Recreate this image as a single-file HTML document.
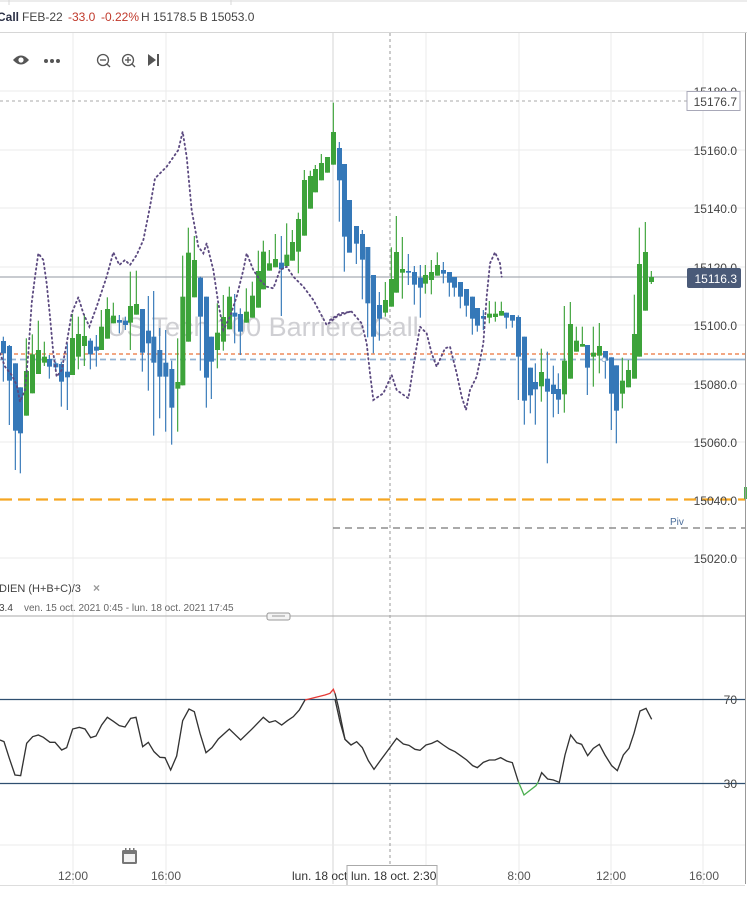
<!DOCTYPE html>
<html><head><meta charset="utf-8"><style>
html,body{margin:0;padding:0;background:#fff;width:747px;height:910px;overflow:hidden;font-family:"Liberation Sans",sans-serif}
svg{position:absolute;left:0;top:0}
</style></head><body>
<svg width="747" height="910" viewBox="0 0 747 910" xmlns="http://www.w3.org/2000/svg" font-family="Liberation Sans, sans-serif">
<line x1="0" y1="1" x2="747" y2="1" stroke="#d8d8d8"/>
<line x1="9" y1="0" x2="9" y2="5" stroke="#d8d8d8"/>
<line x1="231" y1="0" x2="231" y2="5" stroke="#d8d8d8"/>
<text x="-3" y="21" font-size="12" font-weight="bold" fill="#2a2f45">Call</text>
<text x="22" y="21" font-size="12" fill="#444">FEB-22</text>
<text x="68" y="21" font-size="12" fill="#c0392b">-33.0</text>
<text x="101" y="21" font-size="12" fill="#c0392b">-0.22%</text>
<text x="141" y="21" font-size="12" fill="#444">H 15178.5 B 15053.0</text>
<line x1="0" y1="32.5" x2="747" y2="32.5" stroke="#d6d6d6"/>

<g stroke="#ebebeb" stroke-width="1">
<line x1="73" y1="33" x2="73" y2="884"/><line x1="166" y1="33" x2="166" y2="884"/>
<line x1="333" y1="33" x2="333" y2="884" stroke="#d4d4d4"/><line x1="426" y1="33" x2="426" y2="884"/>
<line x1="519" y1="33" x2="519" y2="884"/><line x1="611" y1="33" x2="611" y2="884"/>
<line x1="703" y1="33" x2="703" y2="884"/>
<line x1="0" y1="91" x2="745" y2="91"/><line x1="0" y1="150" x2="745" y2="150"/>
<line x1="0" y1="208" x2="745" y2="208"/><line x1="0" y1="267" x2="745" y2="267"/>
<line x1="0" y1="325" x2="745" y2="325"/><line x1="0" y1="384" x2="745" y2="384"/>
<line x1="0" y1="442" x2="745" y2="442"/><line x1="0" y1="558" x2="745" y2="558"/>
<line x1="0" y1="845" x2="745" y2="845"/>
</g>

<g fill="#555">
<path d="M13 60 Q21 51 29 60 Q21 69 13 60Z"/><circle cx="21" cy="60" r="2.6" fill="#fff"/>
<circle cx="46" cy="61" r="2"/><circle cx="52" cy="61" r="2"/><circle cx="58" cy="61" r="2"/>
<path d="M148 54 L156 60 L148 66Z"/><rect x="157" y="54" width="2" height="12"/>
</g>
<g fill="none" stroke="#555" stroke-width="1.3">
<circle cx="103" cy="60" r="5.5"/><line x1="100" y1="60" x2="106" y2="60"/><line x1="107" y1="64" x2="110" y2="67"/>
<circle cx="128" cy="60" r="5.5"/><line x1="125" y1="60" x2="131" y2="60"/><line x1="128" y1="57" x2="128" y2="63"/><line x1="132" y1="64" x2="135" y2="67"/>
</g>

<text x="107" y="336" font-size="27" fill="#cfcfd3">US Tech 100 Barrière Call</text>

<line x1="390" y1="33" x2="390" y2="865" stroke="#999" stroke-dasharray="3,3"/>

<line x1="0" y1="101" x2="688" y2="101" stroke="#aaa" stroke-dasharray="3,3"/>
<line x1="0" y1="277" x2="688" y2="277" stroke="#a7acb4" stroke-width="1.2"/>
<line x1="0" y1="354" x2="745" y2="354" stroke="#ee8a5a" stroke-width="1.5" stroke-dasharray="4,3"/>
<line x1="0" y1="359.5" x2="603" y2="359.5" stroke="#95b4d3" stroke-width="1.8" stroke-dasharray="6,4"/>
<line x1="603" y1="359.5" x2="745" y2="359.5" stroke="#95b4d3" stroke-width="1.8"/>
<line x1="0" y1="499.5" x2="745" y2="499.5" stroke="#f5a623" stroke-width="2.2" stroke-dasharray="12,6"/>
<line x1="333" y1="528" x2="745" y2="528" stroke="#777" stroke-width="1.3" stroke-dasharray="7,5"/>
<text x="670" y="525" font-size="10" fill="#4a6d9a">Piv</text>
<rect x="744" y="487" width="3" height="12" fill="#4caf50"/>

<g transform="translate(0,90) scale(0.33333)">
<g stroke="#3578b8" stroke-width="3.5">
<line x1="10" y1="740" x2="10" y2="875"/><line x1="28" y1="765" x2="28" y2="1005"/><line x1="46" y1="820" x2="46" y2="1140"/><line x1="61" y1="892" x2="61" y2="1150"/>
<line x1="148" y1="795" x2="148" y2="866"/><line x1="167" y1="815" x2="167" y2="840"/><line x1="184" y1="815" x2="184" y2="950"/><line x1="202" y1="760" x2="202" y2="960"/>
<line x1="271" y1="745" x2="271" y2="838"/><line x1="289" y1="735" x2="289" y2="830"/><line x1="358" y1="675" x2="358" y2="730"/><line x1="376" y1="680" x2="376" y2="720"/>
<line x1="427" y1="657" x2="427" y2="845"/><line x1="445" y1="618" x2="445" y2="902"/><line x1="461" y1="603" x2="461" y2="1037"/><line x1="479" y1="714" x2="479" y2="985"/>
<line x1="497" y1="720" x2="497" y2="1025"/><line x1="515" y1="812" x2="515" y2="1064"/><line x1="601" y1="560" x2="601" y2="842"/><line x1="619" y1="620" x2="619" y2="953"/>
<line x1="634" y1="740" x2="634" y2="927"/><line x1="704" y1="612" x2="704" y2="760"/><line x1="721" y1="655" x2="721" y2="795"/><line x1="844" y1="438" x2="844" y2="678"/>
<line x1="1018" y1="156" x2="1018" y2="395"/><line x1="1033" y1="222" x2="1033" y2="545"/>
</g>
<g fill="#3578b8">
<rect x="3" y="753" width="15" height="37"/><rect x="21" y="768" width="15" height="104"/><rect x="39" y="820" width="15" height="202"/><rect x="54" y="892" width="15" height="138"/>
<rect x="141" y="807" width="15" height="23"/><rect x="160" y="820" width="15" height="12"/><rect x="177" y="822" width="15" height="53"/><rect x="195" y="845" width="15" height="17"/>
<rect x="264" y="752" width="15" height="41"/><rect x="282" y="770" width="15" height="12"/><rect x="351" y="690" width="15" height="8"/><rect x="369" y="692" width="15" height="13"/>
<rect x="420" y="657" width="15" height="131"/><rect x="438" y="722" width="15" height="38"/><rect x="454" y="740" width="15" height="78"/><rect x="472" y="780" width="15" height="80"/>
<rect x="490" y="818" width="15" height="42"/><rect x="508" y="837" width="15" height="116"/><rect x="594" y="563" width="15" height="117"/><rect x="612" y="620" width="15" height="243"/>
<rect x="627" y="740" width="15" height="75"/><rect x="697" y="668" width="15" height="12"/><rect x="714" y="672" width="15" height="53"/><rect x="837" y="518" width="15" height="20"/>
<rect x="1011" y="174" width="15" height="97"/><rect x="1026" y="222" width="15" height="218"/><rect x="1041" y="330" width="15" height="158"/>
</g>
<g stroke="#3da33a" stroke-width="3.5">
<line x1="79" y1="745" x2="79" y2="977"/><line x1="97" y1="733" x2="97" y2="910"/><line x1="115" y1="692" x2="115" y2="852"/><line x1="133" y1="755" x2="133" y2="828"/>
<line x1="217" y1="672" x2="217" y2="855"/><line x1="235" y1="680" x2="235" y2="838"/><line x1="253" y1="672" x2="253" y2="828"/><line x1="304" y1="660" x2="304" y2="780"/>
<line x1="322" y1="622" x2="322" y2="746"/><line x1="340" y1="638" x2="340" y2="700"/><line x1="391" y1="545" x2="391" y2="780"/><line x1="409" y1="542" x2="409" y2="674"/>
<line x1="533" y1="745" x2="533" y2="1025"/><line x1="548" y1="497" x2="548" y2="886"/><line x1="565" y1="413" x2="565" y2="755"/><line x1="583" y1="438" x2="583" y2="622"/>
<line x1="652" y1="640" x2="652" y2="835"/><line x1="670" y1="615" x2="670" y2="782"/><line x1="688" y1="590" x2="688" y2="718"/><line x1="739" y1="595" x2="739" y2="698"/>
<line x1="757" y1="575" x2="757" y2="683"/><line x1="775" y1="482" x2="775" y2="653"/><line x1="790" y1="452" x2="790" y2="598"/><line x1="808" y1="480" x2="808" y2="542"/>
<line x1="826" y1="432" x2="826" y2="532"/><line x1="860" y1="400" x2="860" y2="528"/><line x1="877" y1="420" x2="877" y2="512"/><line x1="895" y1="368" x2="895" y2="550"/>
<line x1="913" y1="240" x2="913" y2="437"/><line x1="931" y1="242" x2="931" y2="356"/><line x1="946" y1="225" x2="946" y2="307"/><line x1="964" y1="192" x2="964" y2="271"/>
<line x1="982" y1="201" x2="982" y2="248"/><line x1="1000" y1="38" x2="1000" y2="224"/>
</g>
<g fill="#3da33a">
<rect x="72" y="843" width="15" height="134"/><rect x="90" y="793" width="15" height="117"/><rect x="108" y="780" width="15" height="72"/><rect x="126" y="800" width="15" height="18"/>
<rect x="210" y="744" width="15" height="111"/><rect x="228" y="732" width="15" height="68"/><rect x="246" y="738" width="15" height="30"/><rect x="297" y="710" width="15" height="70"/>
<rect x="315" y="657" width="15" height="89"/><rect x="333" y="677" width="15" height="23"/><rect x="384" y="648" width="15" height="50"/><rect x="402" y="642" width="15" height="32"/>
<rect x="526" y="876" width="15" height="20"/><rect x="541" y="620" width="15" height="266"/><rect x="558" y="488" width="15" height="267"/><rect x="576" y="510" width="15" height="112"/>
<rect x="645" y="728" width="15" height="52"/><rect x="663" y="681" width="15" height="74"/><rect x="681" y="620" width="15" height="98"/><rect x="732" y="665" width="15" height="33"/>
<rect x="750" y="617" width="15" height="66"/><rect x="768" y="543" width="15" height="110"/><rect x="783" y="485" width="15" height="113"/><rect x="801" y="520" width="15" height="22"/>
<rect x="819" y="507" width="15" height="25"/><rect x="853" y="494" width="15" height="34"/><rect x="870" y="456" width="15" height="56"/><rect x="888" y="387" width="15" height="98"/>
<rect x="906" y="270" width="15" height="167"/><rect x="924" y="258" width="15" height="98"/><rect x="939" y="237" width="15" height="70"/><rect x="957" y="219" width="15" height="52"/>
<rect x="975" y="201" width="15" height="47"/><rect x="993" y="126" width="15" height="98"/>
</g>
<polyline fill="none" stroke="#5c4a80" stroke-width="5.5" stroke-dasharray="4,10" stroke-linecap="round" points="0,790 15,830 35,855 50,885 60,935 75,900 85,790 95,640 105,560 115,490 130,510 140,580 150,680 160,790 170,860 185,840 200,760 215,670 235,622 250,670 268,710 290,650 320,560 340,487 358,525 375,510 390,525 410,495 430,450 450,350 465,265 500,230 535,180 548,125 560,200 575,360 595,470 610,490 620,460 640,540 655,640 670,720 690,680 710,620 730,540 740,490 760,540 780,570 800,590 820,595 840,540 860,530 880,560 910,590 940,630 980,705 1010,680 1050,665"/>
</g>

<g transform="translate(330,90) scale(0.33333)">
<g stroke="#3578b8" stroke-width="3.5">
<line x1="79" y1="408" x2="79" y2="522"/><line x1="97" y1="420" x2="97" y2="628"/><line x1="113" y1="471" x2="113" y2="742"/><line x1="130" y1="555" x2="130" y2="790"/>
<line x1="148" y1="606" x2="148" y2="752"/><line x1="235" y1="492" x2="235" y2="585"/><line x1="253" y1="528" x2="253" y2="644"/><line x1="271" y1="525" x2="271" y2="683"/>
<line x1="340" y1="516" x2="340" y2="580"/><line x1="358" y1="546" x2="358" y2="620"/><line x1="373" y1="561" x2="373" y2="620"/><line x1="391" y1="576" x2="391" y2="655"/>
<line x1="409" y1="597" x2="409" y2="680"/><line x1="427" y1="620" x2="427" y2="734"/><line x1="442" y1="654" x2="442" y2="725"/><line x1="460" y1="660" x2="460" y2="720"/>
<line x1="529" y1="668" x2="529" y2="716"/><line x1="547" y1="675" x2="547" y2="713"/><line x1="565" y1="676" x2="565" y2="930"/><line x1="583" y1="740" x2="583" y2="1004"/>
<line x1="601" y1="833" x2="601" y2="970"/><line x1="616" y1="820" x2="616" y2="1004"/><line x1="652" y1="785" x2="652" y2="1120"/><line x1="670" y1="827" x2="670" y2="982"/>
<line x1="685" y1="850" x2="685" y2="972"/><line x1="772" y1="765" x2="772" y2="915"/><line x1="826" y1="783" x2="826" y2="866"/><line x1="844" y1="802" x2="844" y2="1020"/>
<line x1="859" y1="826" x2="859" y2="1060"/>
</g>
<g fill="#3578b8">
<rect x="72" y="408" width="15" height="53"/><rect x="90" y="432" width="15" height="77"/><rect x="106" y="471" width="15" height="169"/><rect x="123" y="555" width="15" height="185"/>
<rect x="141" y="645" width="15" height="41"/><rect x="228" y="543" width="15" height="5"/><rect x="246" y="546" width="15" height="38"/><rect x="264" y="563" width="15" height="30"/>
<rect x="333" y="540" width="15" height="11"/><rect x="351" y="546" width="15" height="32"/><rect x="366" y="561" width="15" height="32"/><rect x="384" y="576" width="15" height="44"/>
<rect x="402" y="597" width="15" height="50"/><rect x="420" y="620" width="15" height="66"/><rect x="435" y="654" width="15" height="53"/><rect x="453" y="678" width="15" height="8"/>
<rect x="522" y="668" width="15" height="15"/><rect x="540" y="675" width="15" height="17"/><rect x="558" y="681" width="15" height="119"/><rect x="576" y="740" width="15" height="192"/>
<rect x="594" y="833" width="15" height="83"/><rect x="609" y="876" width="15" height="22"/><rect x="645" y="866" width="15" height="39"/><rect x="663" y="884" width="15" height="28"/>
<rect x="678" y="897" width="15" height="32"/><rect x="765" y="765" width="15" height="68"/><rect x="819" y="783" width="15" height="29"/><rect x="837" y="802" width="15" height="109"/>
<rect x="852" y="826" width="15" height="136"/>
</g>
<g stroke="#3da33a" stroke-width="3.5">
<line x1="166" y1="576" x2="166" y2="680"/><line x1="184" y1="472" x2="184" y2="650"/><line x1="199" y1="378" x2="199" y2="608"/><line x1="217" y1="441" x2="217" y2="626"/>
<line x1="286" y1="525" x2="286" y2="611"/><line x1="304" y1="510" x2="304" y2="613"/><line x1="322" y1="487" x2="322" y2="557"/><line x1="478" y1="633" x2="478" y2="700"/>
<line x1="496" y1="635" x2="496" y2="695"/><line x1="514" y1="635" x2="514" y2="677"/><line x1="634" y1="776" x2="634" y2="935"/><line x1="703" y1="648" x2="703" y2="968"/>
<line x1="721" y1="636" x2="721" y2="866"/><line x1="739" y1="710" x2="739" y2="785"/><line x1="757" y1="710" x2="757" y2="770"/><line x1="790" y1="710" x2="790" y2="890"/>
<line x1="808" y1="699" x2="808" y2="850"/><line x1="877" y1="803" x2="877" y2="955"/><line x1="895" y1="810" x2="895" y2="892"/><line x1="913" y1="614" x2="913" y2="866"/>
<line x1="928" y1="413" x2="928" y2="800"/><line x1="946" y1="396" x2="946" y2="662"/><line x1="964" y1="543" x2="964" y2="582"/>
</g>
<g fill="#3da33a">
<rect x="159" y="630" width="15" height="38"/><rect x="177" y="567" width="15" height="83"/><rect x="192" y="486" width="15" height="122"/><rect x="210" y="537" width="15" height="11"/>
<rect x="279" y="555" width="15" height="26"/><rect x="297" y="546" width="15" height="24"/><rect x="315" y="525" width="15" height="32"/><rect x="471" y="671" width="15" height="12"/>
<rect x="489" y="671" width="15" height="10"/><rect x="507" y="663" width="15" height="14"/><rect x="627" y="846" width="15" height="43"/><rect x="696" y="812" width="15" height="101"/>
<rect x="714" y="702" width="15" height="164"/><rect x="732" y="752" width="15" height="33"/><rect x="750" y="762" width="15" height="8"/><rect x="783" y="788" width="15" height="12"/>
<rect x="801" y="768" width="15" height="29"/><rect x="870" y="872" width="15" height="39"/><rect x="888" y="840" width="15" height="52"/><rect x="906" y="732" width="15" height="134"/>
<rect x="921" y="522" width="15" height="278"/><rect x="939" y="486" width="15" height="176"/><rect x="957" y="561" width="15" height="15"/>
</g>
<polyline fill="none" stroke="#5c4a80" stroke-width="5.5" stroke-dasharray="4,10" stroke-linecap="round" points="0,690 30,670 65,665 95,700 110,760 120,850 130,930 160,910 185,855 200,900 235,925 250,830 270,710 290,730 305,790 320,830 345,775 360,770 380,850 395,920 408,960 420,900 440,860 460,760 470,620 480,520 495,487 510,520 515,560"/>
<circle cx="822" cy="809" r="6" fill="#fff" stroke="#95b4d3" stroke-width="3"/>
</g>

<g font-size="12" fill="#444" text-anchor="end">
<text x="737" y="155">15160.0</text><text x="737" y="213">15140.0</text>
<text x="737" y="330">15100.0</text><text x="737" y="389">15080.0</text><text x="737" y="447">15060.0</text>
<text x="737" y="505">15040.0</text><text x="737" y="563">15020.0</text>
<text x="737" y="96">15180.0</text><text x="737" y="272">15120.0</text>
</g>
<rect x="687" y="91.5" width="53" height="19" fill="#fff" stroke="#a8a8b8"/>
<text x="737" y="106" font-size="12" fill="#444" text-anchor="end">15176.7</text>
<rect x="687" y="268" width="54" height="20" rx="2" fill="#4a5a78"/>
<text x="737" y="283" font-size="12" fill="#fff" text-anchor="end">15116.3</text>
<line x1="745.5" y1="33" x2="745.5" y2="884" stroke="#999"/>

<text x="-1" y="592" font-size="11" fill="#444">DIEN  (H+B+C)/3</text>
<text x="93" y="592" font-size="12" fill="#999" font-weight="bold">×</text>
<text x="-1" y="611" font-size="10" fill="#444">3.4</text>
<text x="24" y="611" font-size="10" fill="#666">ven. 15 oct. 2021 0:45 - lun. 18 oct. 2021 17:45</text>
<line x1="0" y1="616" x2="745" y2="616" stroke="#aaa"/>
<rect x="267" y="613" width="23" height="7" rx="2" fill="#f4f4f4" stroke="#999"/>
<line x1="272" y1="616" x2="285" y2="616" stroke="#999"/>

<line x1="0" y1="699.5" x2="745" y2="699.5" stroke="#2f4f70" stroke-width="1.2"/>
<line x1="0" y1="783.5" x2="745" y2="783.5" stroke="#2f4f70" stroke-width="1.2"/>
<text x="737" y="704" font-size="12" fill="#444" text-anchor="end">70</text>
<text x="737" y="788" font-size="12" fill="#444" text-anchor="end">30</text>
<g transform="translate(0,680) scale(0.33333)" fill="none" stroke-width="4">
<polyline stroke="#333" points="0,180 12,185 28,235 45,285 62,287 80,190 98,170 115,165 130,172 150,187 165,187 185,210 200,203 218,147 238,142 255,147 272,173 288,168 305,135 322,112 340,124 358,137 375,141 392,115 408,112 428,200 445,187 462,215 480,232 495,233 512,270 530,228 548,122 567,87 583,95 600,160 618,218 636,203 655,177 688,147 722,180 755,148 790,112 808,127 826,122 845,135 862,122 880,110 898,90 915,60"/>
<polyline stroke="#e53935" points="915,60 975,45 990,40 1000,28 1005,40"/>
<polyline stroke="#333" points="1005,40 1015,80 1035,178 1050,192"/>
</g>
<g transform="translate(330,680) scale(0.33333)" fill="none" stroke-width="4">
<polyline stroke="#333" points="15,58 30,125 45,178 63,195 80,185 97,203 115,242 132,268 150,243 170,216 200,175 220,192 237,196 255,208 270,211 288,195 305,190 322,182 340,195 358,207 375,215 392,227 410,240 428,257 442,263 460,247 478,240 495,240 512,233 530,243 547,248 565,305"/>
<polyline stroke="#4caf50" points="565,305 582,345 618,317 625,305"/>
<polyline stroke="#333" points="625,305 635,278 653,297 670,300 688,307 705,225 722,165 740,188 755,193 773,227 790,205 808,193 825,225 845,257 862,272 880,225 897,205 912,160 930,93 948,85 965,118"/>
</g>

<rect x="122" y="850" width="15" height="14" rx="1.5" fill="#777"/>
<rect x="124" y="854" width="11" height="8" fill="#f2f2f2"/>
<rect x="125" y="848" width="1.5" height="3" fill="#777"/><rect x="129" y="848" width="1.5" height="3" fill="#777"/><rect x="133" y="848" width="1.5" height="3" fill="#777"/>
<g font-size="12" fill="#555" text-anchor="middle">
<text x="73" y="880">12:00</text><text x="166" y="880">16:00</text>
<text x="519" y="880">8:00</text><text x="611" y="880">12:00</text><text x="704" y="880">16:00</text>
</g>
<text x="292" y="880" font-size="12" fill="#333">lun. 18 oct</text>
<rect x="347" y="865.5" width="90" height="20" fill="#fff" stroke="#aaa"/>
<text x="351" y="880" font-size="12" fill="#333">lun. 18 oct. 2:30</text>
<line x1="0" y1="885.5" x2="745" y2="885.5" stroke="#ddd"/>
</svg>
</body></html>
